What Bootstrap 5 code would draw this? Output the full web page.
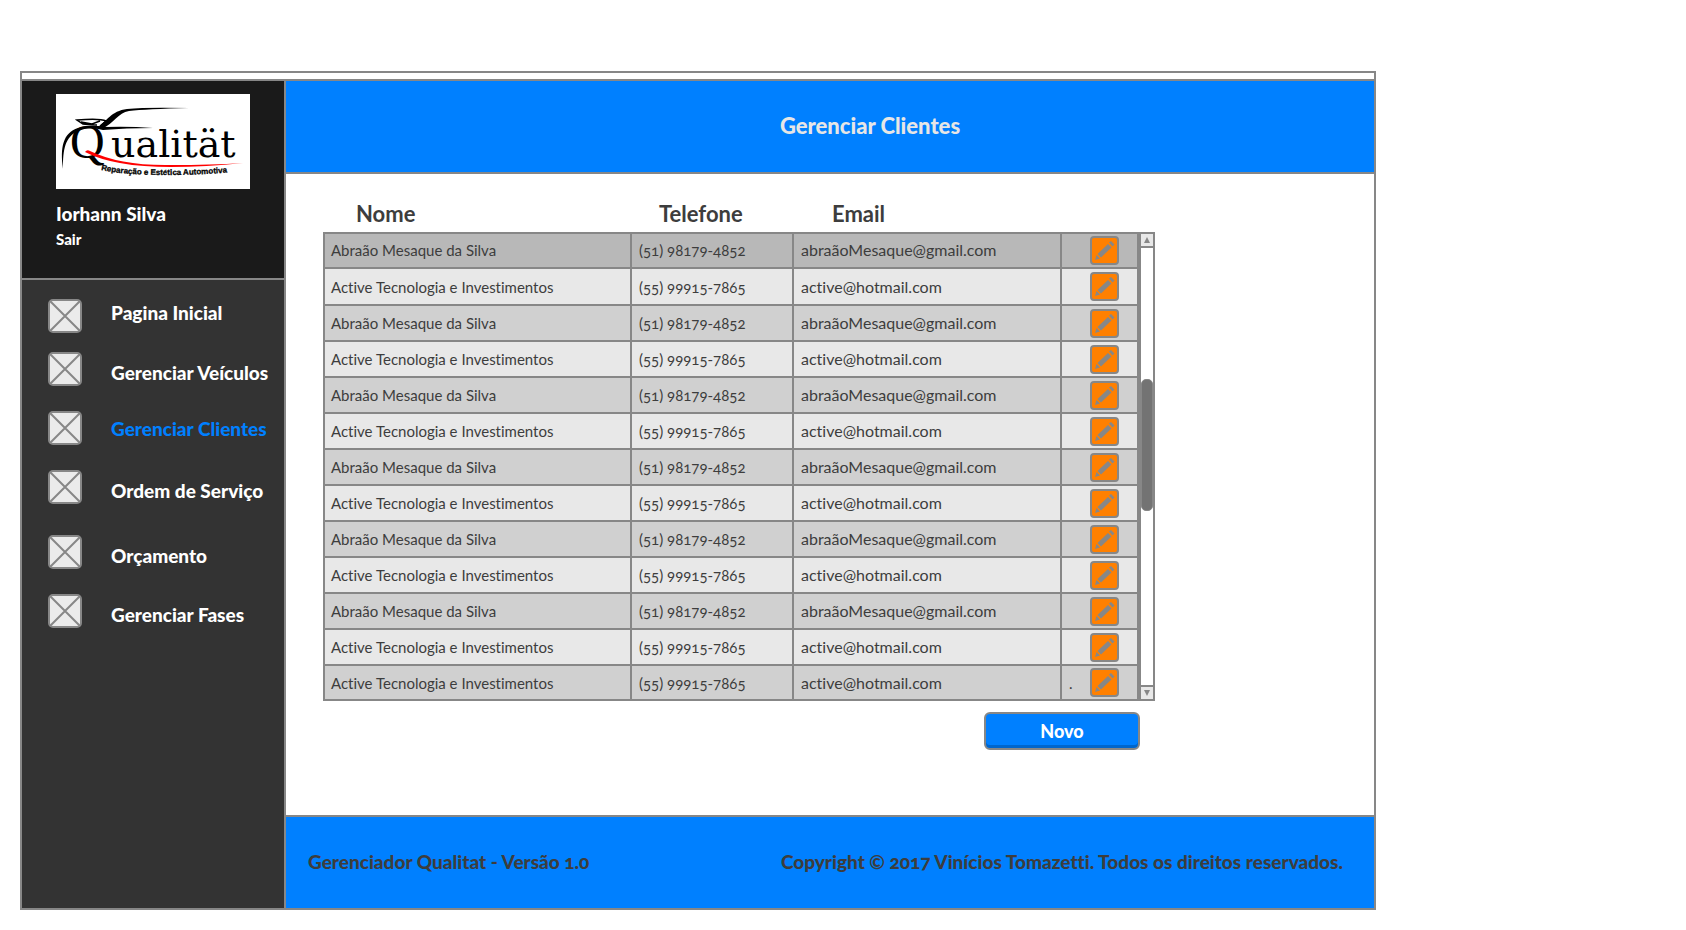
<!DOCTYPE html>
<html lang="pt-BR">
<head>
<meta charset="utf-8">
<meta name="viewport" content="width=device-width, initial-scale=1">
<title>Gerenciar Clientes</title>
<link href="https://cdn.jsdelivr.net/npm/bootstrap@5.3.0/dist/css/bootstrap.min.css" rel="stylesheet">
<style>
  :root { --line: #878787; --blue: #0080ff; --ink: #3d3d3d; }
  body { font-family: Lato, "Noto Sans", sans-serif; font-variant-numeric: oldstyle-nums; font-variant-ligatures: none; color: var(--ink); background: #fff; padding: 71px 20px 20px; }
  .app-frame { max-width: 1356px; min-height: calc(100vh - 91px); border: 2px solid var(--line); padding-top: 6px; }
  .app-body { border-top: 2px solid var(--line); }
  .side { width: 264px; flex: none; background: #333; border-right: 2px solid var(--line); color: #fff; font-weight: 900; font-size: 19px; }
  .side a { color: inherit; text-decoration: none; line-height: 27px; white-space: nowrap; }
  .side a.active { color: var(--blue); }
  .profile { background: #1a1a1a; height: 199px; padding: 13px 34px 0; border-bottom: 2px solid var(--line); }
  .profile svg { display: block; }
  .user-name { margin-top: 12px; line-height: 26px; }
  .profile a { font-size: 15px; line-height: 24px; }
  .menu { padding: 19px 0 0 26px; margin: 0; }
  .menu li { gap: 29px; height: 34px; margin-bottom: 25px; }
  .menu li.near { margin-bottom: 19px; }
  .menu li.far { margin-bottom: 31px; }
  .top-bar, .bottom-bar { background: var(--blue); }
  .top-bar { height: 93px; border-bottom: 2px solid var(--line); padding-left: 80px; }
  .top-bar h1 { font-size: 22px; font-weight: 900; color: #e6e6e6; margin: 0; }
  .bottom-bar { min-height: 93px; border-top: 2px solid var(--line); padding: 0 31px 0 22px; font-size: 19px; font-weight: 900; }
  .content { padding: 22px 37px; }
  .grid-wrap { max-width: 832px; }
  .clients { table-layout: fixed; border-collapse: collapse; color: var(--ink); font-size: 15px; }
  .clients th { height: 37px; padding: 0 0 0 32px; line-height: 36px; font-size: 22px; font-weight: 700; }
  .clients th.tel { padding-left: 28px; }
  .clients th.mail { padding-left: 39px; }
  .clients tbody td { border: 2px solid var(--line); height: 36px; padding: 0 7px; line-height: 28px; background: #e8e8e8; }
  .clients tbody td:nth-child(1) { padding-left: 6px; }
  .clients tbody td:nth-child(3) { font-size: 16px; }
  .clients tbody tr:nth-child(odd) td, .clients tbody tr:last-child td { background: #d0d0d0; }
  .clients tbody tr:first-child td { background: #b8b8b8; height: 35px; }
  .clients tbody tr:first-child td:not(:last-child) { padding-bottom: 2px; }
  .clients tbody tr:nth-child(2) td { height: 37px; }
  .clients tbody tr:last-child td { height: 35px; }
  .c-tel { width: 162px; } .c-mail { width: 268px; } .c-act { width: 77px; }
  .edit { width: 29px; height: 29px; padding: 0; border: 2px solid var(--line); border-radius: 4px; background: #ff8000; display: block; }
  .edit svg { display: block; }
  .act { padding-right: 11px; }
  .scroller { width: 16px; flex: none; margin-top: 36px; border: 2px solid var(--line); }
  .scroller button { height: 14px; padding: 0; border: 0 solid var(--line); background: #e8e8e8; }
  .scroller .up { border-bottom-width: 2px; }
  .scroller .down { border-top-width: 2px; }
  .scroller svg { display: block; }
  .thumb { flex: 3 0 0; background: #737373; border: 1px solid var(--line); border-radius: 5px; }
  .new-btn { width: 156px; height: 38px; margin: 11px 15px 0 0; border: 2px solid var(--line); border-radius: 6px; background: var(--blue); box-shadow: inset 0 -3px #0066cc; color: #fff; font-size: 18px; font-weight: 900; padding: 0; }
</style>
</head>
<body>
<svg width="0" height="0" class="position-absolute" aria-hidden="true">
  <symbol id="box" viewBox="0 0 34 34"><rect x="1" y="1" width="32" height="32" rx="4" fill="#ebebeb" stroke="#878787" stroke-width="2"/><path d="M2 2l30 30M32 2L2 32" stroke="#878787" stroke-width="2"/></symbol>
  <symbol id="pen" viewBox="0 0 25 25"><path d="M3 22l1.500-5L8 20.500zM5.500 16L16 6l3.500 3.500L9 19.500zM17 4.500L19 3l3.500 3.500L20.500 8.500z" fill="#878787"/></symbol>
</svg>
<div class="app-frame d-flex flex-column">
  <div class="app-body d-flex flex-grow-1">
    <aside class="side">
      <div class="profile">
        <svg width="194" height="95" viewBox="0 0 194 95" role="img" aria-label="Qualität">
          <rect width="194" height="95" fill="#fff"/>
          <path d="M7 75C4 53 7 39 22 34Q35 30 48 33Q72 32 97 34Q70 34 47 36Q33 32 22 37C9 43 7 55 7 75z"/>
          <path d="M41 34C51 27 55 17 71 15Q90 13 133 14Q90 15 73 17C62 19 58 29 46 35z"/>
          <path d="M44 32L50 27Q44 24 21 26L27 30Q33 31 41 31M25 28L36 30L44 27" fill="none" stroke="#000" stroke-width="1.5"/>
          <text x="14" y="64" font-family="Liberation Serif, serif" font-weight="400" font-size="48">Q</text>
          <text x="55" y="63" font-family="DejaVu Serif, serif" font-weight="400" font-size="38">ualität</text>
          <path d="M29 58Q31 55 34 57Q65 72 115 71Q155 71 187 69Q150 73 115 73Q58 73 29 58z" fill="#f00"/>
          <path id="arc" d="M45 76Q90 85 178 78" fill="none"/>
          <text font-family="Liberation Sans, sans-serif" font-weight="700" font-size="8" stroke="#000" stroke-width=".3"><textPath href="#arc">Reparação e Estética Automotiva</textPath></text>
        </svg>
        <div class="user-name">Iorhann Silva</div>
        <a href="#" class="d-block">Sair</a>
      </div>
      <ul class="menu list-unstyled">
        <li class="d-flex near"><svg width="34" height="34"><use href="#box"/></svg><a href="#" class="align-self-start">Pagina Inicial</a></li>
        <li class="d-flex"><svg width="34" height="34"><use href="#box"/></svg><a href="#" class="align-self-end">Gerenciar Veículos</a></li>
        <li class="d-flex"><svg width="34" height="34"><use href="#box"/></svg><a href="#" class="active align-self-center">Gerenciar Clientes</a></li>
        <li class="d-flex far"><svg width="34" height="34"><use href="#box"/></svg><a href="#" class="align-self-end">Ordem de Serviço</a></li>
        <li class="d-flex"><svg width="34" height="34"><use href="#box"/></svg><a href="#" class="align-self-end">Orçamento</a></li>
        <li class="d-flex"><svg width="34" height="34"><use href="#box"/></svg><a href="#" class="align-self-end">Gerenciar Fases</a></li>
      </ul>
    </aside>
    <div class="d-flex flex-column flex-grow-1">
      <header class="top-bar d-flex align-items-center justify-content-center"><h1>Gerenciar Clientes</h1></header>
      <main class="content flex-grow-1">
        <div class="grid-wrap">
          <div class="d-flex">
            <table class="clients w-100">
              <colgroup><col><col class="c-tel"><col class="c-mail"><col class="c-act"></colgroup>
              <thead><tr><th scope="col">Nome</th><th scope="col" class="tel">Telefone</th><th scope="col" class="mail">Email</th><td></td></tr></thead>
              <tbody id="rows"></tbody>
            </table>
            <div class="scroller d-flex flex-column">
              <button class="up" type="button" aria-label="Subir"><svg width="12" height="12"><path d="M6 3l3 6H3z" fill="#878787"/></svg></button>
              <div style="flex:3 0 0"></div>
              <div class="thumb"></div>
              <div style="flex:4 0 0"></div>
              <button class="down" type="button" aria-label="Descer"><svg width="12" height="12"><path d="M6 9l3-6H3z" fill="#878787"/></svg></button>
            </div>
          </div>
          <div class="d-flex justify-content-end"><button class="new-btn" type="button">Novo</button></div>
        </div>
      </main>
      <footer class="bottom-bar d-flex align-items-center justify-content-between"><span>Gerenciador Qualitat - Versão 1.0</span><span>Copyright © 2017 Vinícios Tomazetti. Todos os direitos reservados.</span></footer>
    </div>
  </div>
</div>
<script src="https://cdn.jsdelivr.net/npm/bootstrap@5.3.0/dist/js/bootstrap.bundle.min.js"></script>
<script>
  const a = ['Abraão Mesaque da Silva', '(51) 98179-4852', 'abraãoMesaque@gmail.com'];
  const b = ['Active Tecnologia e Investimentos', '(55) 99915-7865', 'active@hotmail.com'];
  const list = [a, b, a, b, a, b, a, b, a, b, a, b, b];
  document.getElementById('rows').innerHTML = list.map((r, i) =>
    '<tr>' + r.map(t => `<td>${t}</td>`).join('') +
    `<td><div class="act d-flex align-items-center justify-content-between"><span>${i === 12 ? '.' : ''}</span><button class="edit" type="button" aria-label="Editar"><svg width="25" height="25"><use href="#pen"/></svg></button></div></td></tr>`).join('');
</script>
</body>
</html>
